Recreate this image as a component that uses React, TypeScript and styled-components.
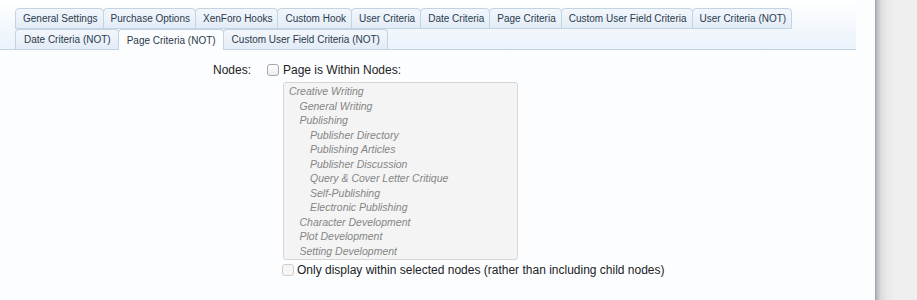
import React from "react";
import styled, { createGlobalStyle } from "styled-components";

const GlobalStyle = createGlobalStyle`
  html, body {
    margin: 0;
    padding: 0;
    height: 100%;
    background: #eeeeee;
    font-family: "Liberation Sans", sans-serif;
  }
  #root {
    height: 100%;
  }
`;

const rowOne = [
  "General Settings",
  "Purchase Options",
  "XenForo Hooks",
  "Custom Hook",
  "User Criteria",
  "Date Criteria",
  "Page Criteria",
  "Custom User Field Criteria",
  "User Criteria (NOT)",
];

const rowTwo = [
  "Date Criteria (NOT)",
  "Page Criteria (NOT)",
  "Custom User Field Criteria (NOT)",
];

const nodes: { title: string; depth: number }[] = [
  { title: "Creative Writing", depth: 0 },
  { title: "General Writing", depth: 1 },
  { title: "Publishing", depth: 1 },
  { title: "Publisher Directory", depth: 2 },
  { title: "Publishing Articles", depth: 2 },
  { title: "Publisher Discussion", depth: 2 },
  { title: "Query & Cover Letter Critique", depth: 2 },
  { title: "Self-Publishing", depth: 2 },
  { title: "Electronic Publishing", depth: 2 },
  { title: "Character Development", depth: 1 },
  { title: "Plot Development", depth: 1 },
  { title: "Setting Development", depth: 1 },
];

const App = () => {
  const active = "Page Criteria (NOT)";
  return (
    <Page>
      <GlobalStyle />
      <Main>
        <TabBar>
          <TabRow>
            {rowOne.map((tab) => (
              <Tab key={tab}>{tab}</Tab>
            ))}
          </TabRow>
          <TabRow>
            {rowTwo.map((tab) => (
              <Tab key={tab} $last $active={tab === active}>
                {tab}
              </Tab>
            ))}
          </TabRow>
        </TabBar>

        <Form>
          <FormRow>
            <Label>Nodes:</Label>
            <Controls>
              <CheckLabel>
                <Check type="checkbox" />
                Page is Within Nodes:
              </CheckLabel>
              <NodeList>
                {nodes.map((node) => (
                  <NodeItem key={node.title} $depth={node.depth}>
                    {node.title}
                  </NodeItem>
                ))}
              </NodeList>
              <CheckLabel $muted>
                <Check type="checkbox" disabled />
                Only display within selected nodes (rather than including child nodes)
              </CheckLabel>
            </Controls>
          </FormRow>
        </Form>
      </Main>
      <Sidebar />
    </Page>
  );
};

export default App;

const Page = styled.div`
  display: flex;
  height: 300px;
  overflow: hidden;
`;

const Main = styled.div`
  width: 875px;
  flex-shrink: 0;
  background: #fcfdff;
`;

const Sidebar = styled.div`
  flex: 1;
  background: linear-gradient(
    to right,
    #9aa1a8 0px,
    #b9bec3 2px,
    #dadcde 6px,
    #e9e9e9 12px,
    #efefef 20px
  );
`;

const TabBar = styled.div`
  width: 856px;
  box-sizing: border-box;
  padding: 8px 0 0 15px;
  background: linear-gradient(to bottom, #ffffff 0%, #f6f9fd 40%, #ebf3fb 100%);
  border-bottom: 1px solid #c3d3e2;
`;

const TabRow = styled.div`
  display: flex;
`;

const Tab = styled.div<{ $active?: boolean; $last?: boolean }>`
  display: flex;
  align-items: center;
  box-sizing: border-box;
  height: ${(p) => (p.$last ? (p.$active ? "21px" : "20px") : "21px")};
  margin-bottom: ${(p) => (p.$active ? "-1px" : "0")};
  margin-right: -1px;
  padding: ${(p) => (p.$last ? "0 7px 0 8px" : "0 5px 0 7px")};
  border: 1px solid #c3d3e2;
  border-bottom: ${(p) => (p.$last ? "none" : "1px solid #c3d3e2")};
  border-radius: 4px 4px 0 0;
  background: ${(p) =>
    p.$active
      ? "#fcfdff"
      : "linear-gradient(to bottom, #f3f7fc 0%, #e2ecf7 100%)"};
  color: #2b3a4c;
  font-size: 10px;
  white-space: nowrap;
`;

const Form = styled.div`
  padding: 12px 0 0 0;
`;

const FormRow = styled.div`
  display: flex;
  gap: 16px;
`;

const Label = styled.div`
  width: 251px;
  text-align: right;
  font-size: 12px;
  color: #222;
  line-height: 16px;
`;

const Controls = styled.div`
  display: flex;
  flex-direction: column;
  align-items: flex-start;
`;

const CheckLabel = styled.label<{ $muted?: boolean }>`
  display: flex;
  align-items: center;
  gap: ${(p) => (p.$muted ? "3px" : "4px")};
  font-size: 12px;
  line-height: 16px;
  color: #222;
  margin-left: ${(p) => (p.$muted ? "15px" : "0")};
  margin-top: ${(p) => (p.$muted ? "2px" : "0")};
`;

const Check = styled.input`
  appearance: none;
  margin: 0;
  width: 12px;
  height: 12px;
  box-sizing: border-box;
  border: 1px solid #a9a9a9;
  border-radius: 3px;
  background: linear-gradient(to bottom, #ffffff, #ececec);
  &:disabled {
    border-color: #cfcfcf;
    background: #f6f6f6;
  }
`;

const NodeList = styled.div`
  width: 235px;
  height: 178px;
  box-sizing: border-box;
  margin: 4px 0 0 16px;
  padding: 1px 5px;
  background: #f4f4f4;
  border: 1px solid #d6d6d6;
  border-radius: 3px;
  overflow: hidden;
`;

const NodeItem = styled.div<{ $depth: number }>`
  padding-left: ${(p) => p.$depth * 10.5}px;
  font-style: italic;
  font-size: 10.5px;
  line-height: 14.5px;
  color: #858585;
  white-space: nowrap;
`;
